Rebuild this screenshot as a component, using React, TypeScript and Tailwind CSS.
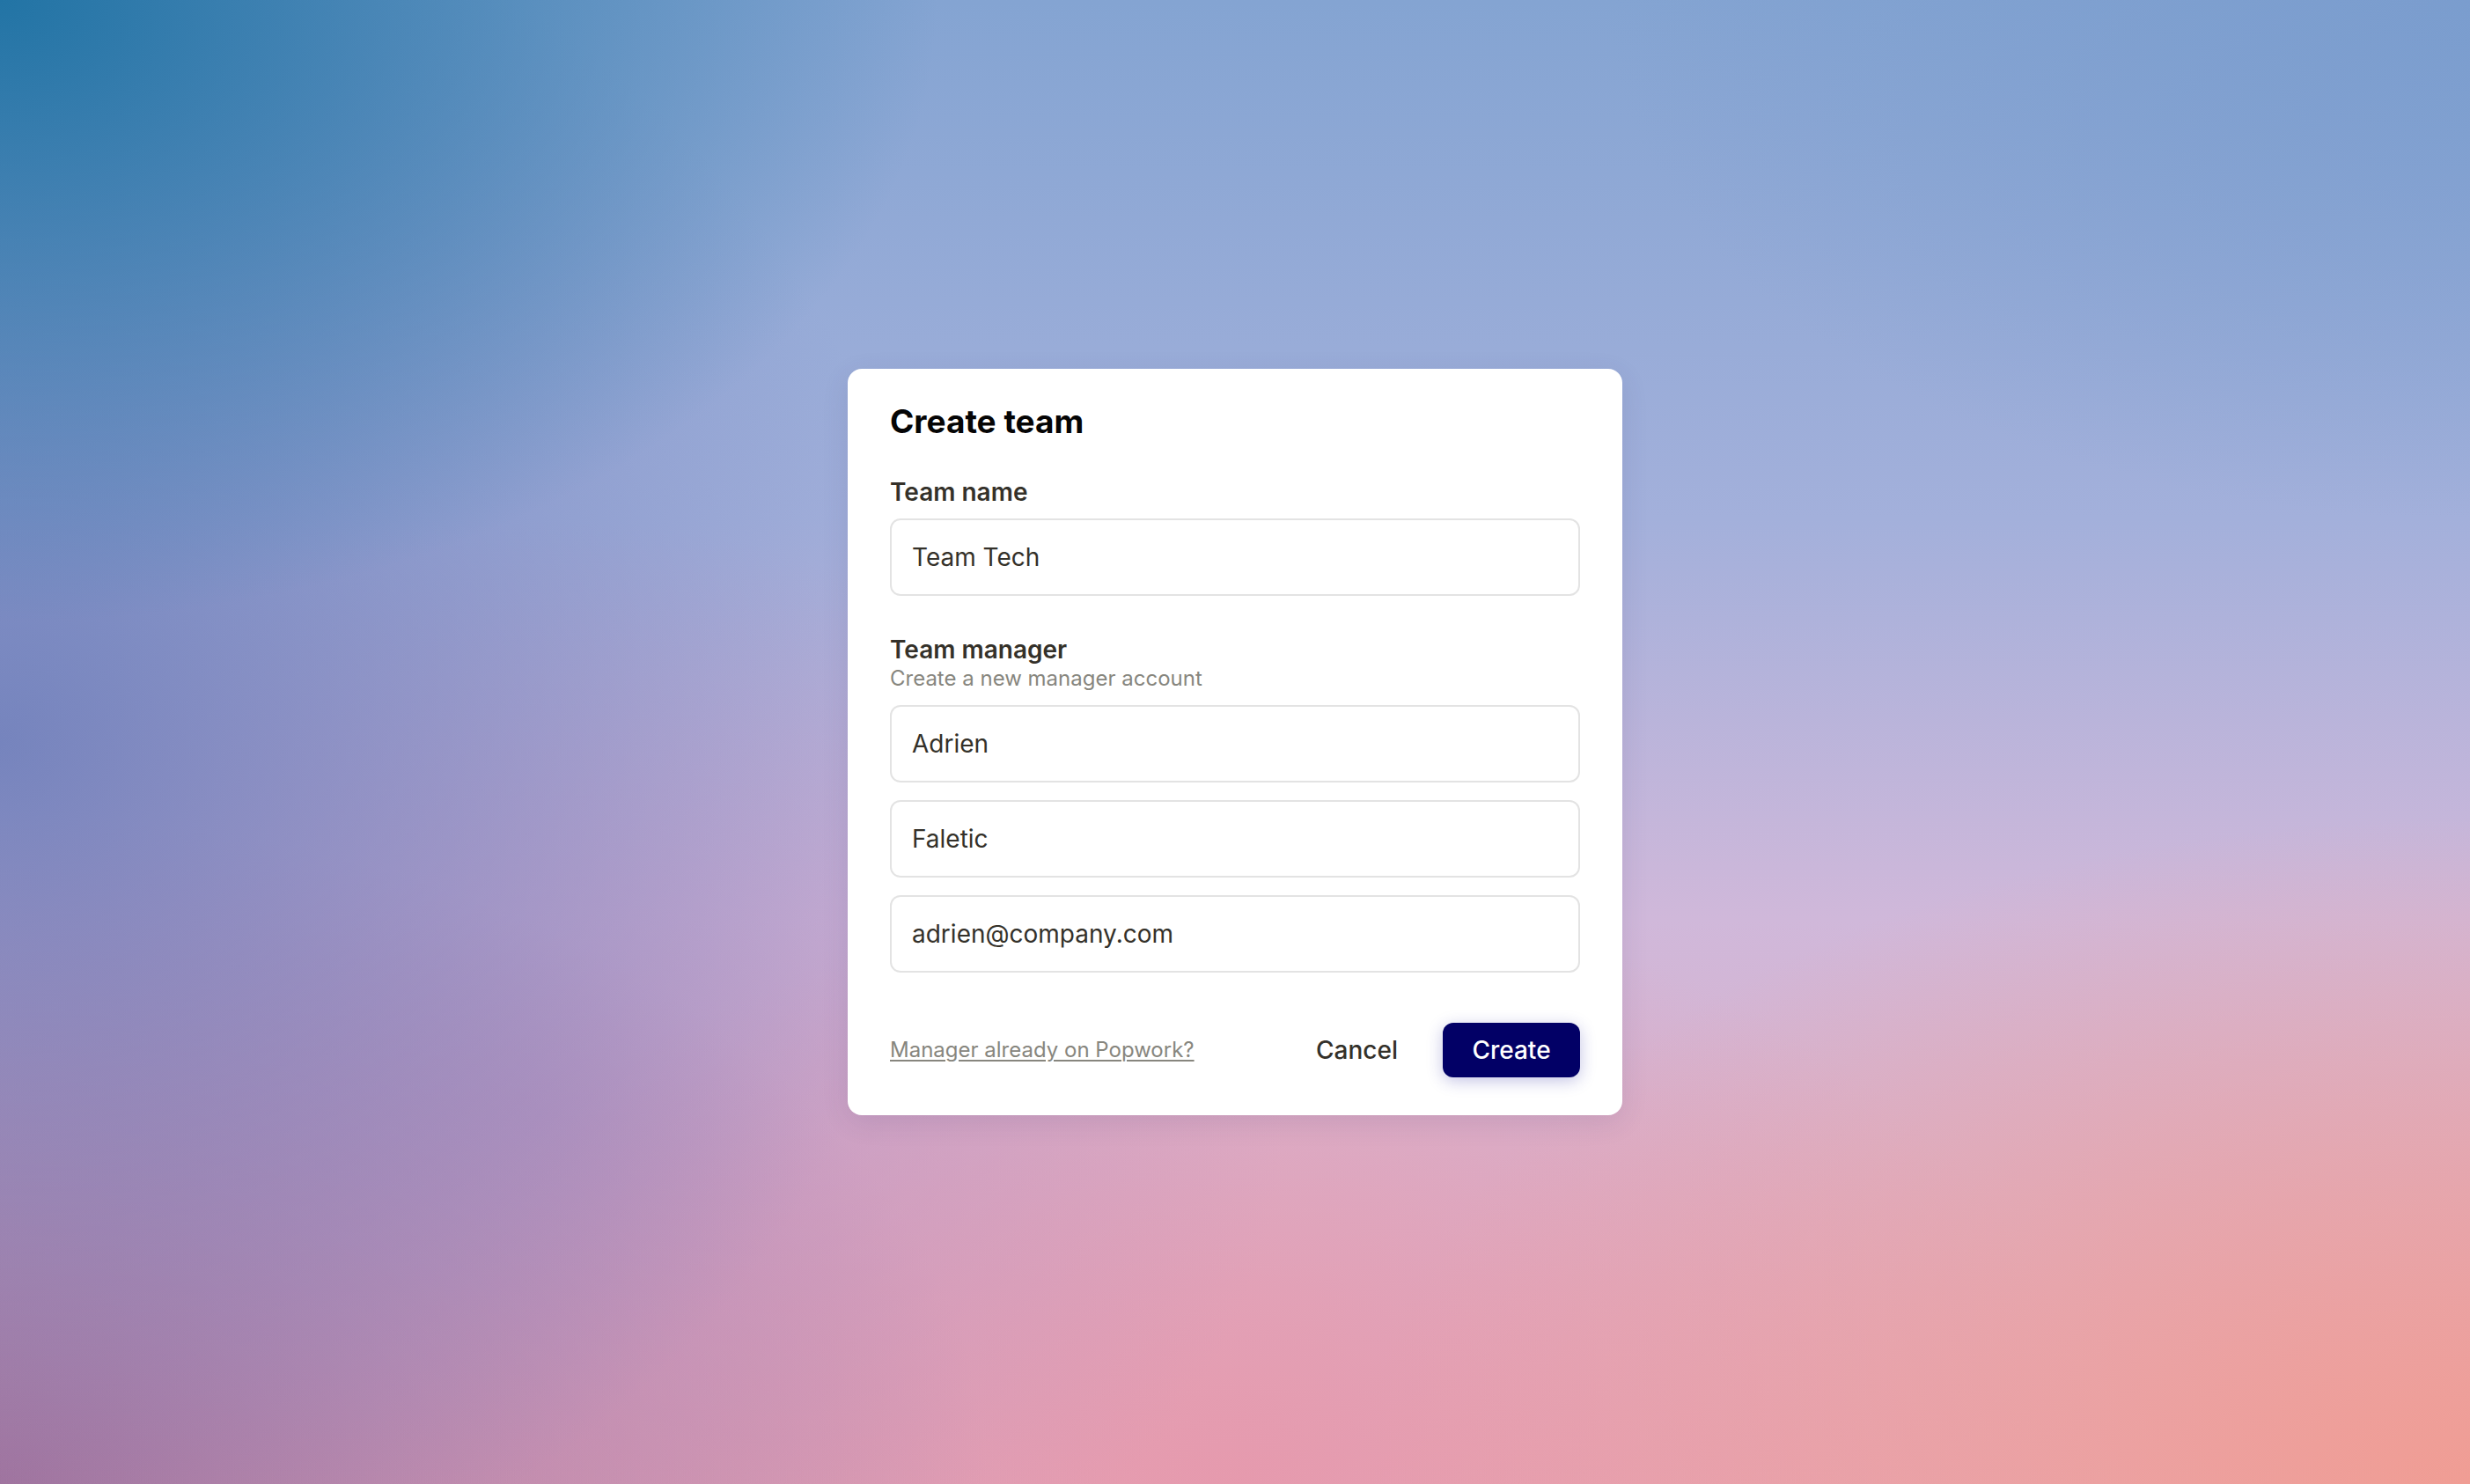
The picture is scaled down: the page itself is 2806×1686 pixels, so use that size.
import React from "react";

function Field({ value }: { value: string }) {
  return (
    <input
      readOnly
      value={value}
      className="block w-full h-[88px] rounded-[12px] border-2 border-[#e3e3e3] bg-white px-[23px] text-[28px] text-[#34312a] outline-none font-[Inter,sans-serif]"
    />
  );
}

export default function App() {
  return (
    <div className="h-screen w-full flex items-center justify-center font-[Inter,sans-serif] bg-[radial-gradient(ellipse_38%_42%_at_0%_0%,#2274a5_0%,rgba(34,116,165,0)_100%),radial-gradient(ellipse_38%_60%_at_0%_50%,rgba(100,120,182,0.8)_0%,rgba(100,120,182,0)_100%),radial-gradient(ellipse_30%_40%_at_22%_75%,rgba(180,140,190,0.6)_0%,rgba(180,140,190,0)_100%),radial-gradient(ellipse_40%_45%_at_0%_100%,#a8739b_0%,rgba(168,115,155,0)_100%),radial-gradient(ellipse_45%_45%_at_100%_100%,#f09d94_0%,rgba(240,157,148,0)_100%),radial-gradient(ellipse_35%_40%_at_50%_100%,rgba(230,150,170,0.8)_0%,rgba(230,150,170,0)_100%),radial-gradient(ellipse_35%_35%_at_100%_0%,rgba(120,155,205,0.8)_0%,rgba(120,155,205,0)_100%),linear-gradient(180deg,#84a4d2_0%,#a3b0db_35%,#d0b8da_62%,#e4a9bb_100%)]">
      <div className="w-[880px] rounded-[16px] bg-white px-[48px] pt-[38px] pb-[43px] shadow-[0_8px_30px_rgba(60,50,110,0.12)]">
        <h1 className="text-[37px] leading-[44px] font-bold text-[#050505]">Create team</h1>

        <div className="mt-[40px] text-[28px] leading-[36px] font-semibold text-[#34312a]">Team name</div>
        <div className="mt-[12px]">
          <Field value="Team Tech" />
        </div>

        <div className="mt-[43px] text-[28px] leading-[36px] font-semibold text-[#34312a]">Team manager</div>
        <div className="text-[24px] leading-[30px] text-[#87867e]">Create a new manager account</div>
        <div className="mt-[15px] flex flex-col gap-[20px]">
          <Field value="Adrien" />
          <Field value="Faletic" />
          <Field value="adrien@company.com" />
        </div>

        <div className="mt-[57px] flex items-center justify-between h-[62px]">
          <a className="text-[24px] text-[#87867e] underline decoration-[2px] underline-offset-[3px] cursor-pointer">
            Manager already on Popwork?
          </a>
          <div className="flex items-center gap-[27px]">
            <button className="h-[62px] px-[24px] rounded-[12px] text-[28px] font-medium text-[#34312a]">
              Cancel
            </button>
            <button className="h-[62px] w-[156px] rounded-[12px] bg-[#020066] text-[28px] font-medium text-white shadow-[0_4px_18px_rgba(40,40,160,0.28)]">
              Create
            </button>
          </div>
        </div>
      </div>
    </div>
  );
}
